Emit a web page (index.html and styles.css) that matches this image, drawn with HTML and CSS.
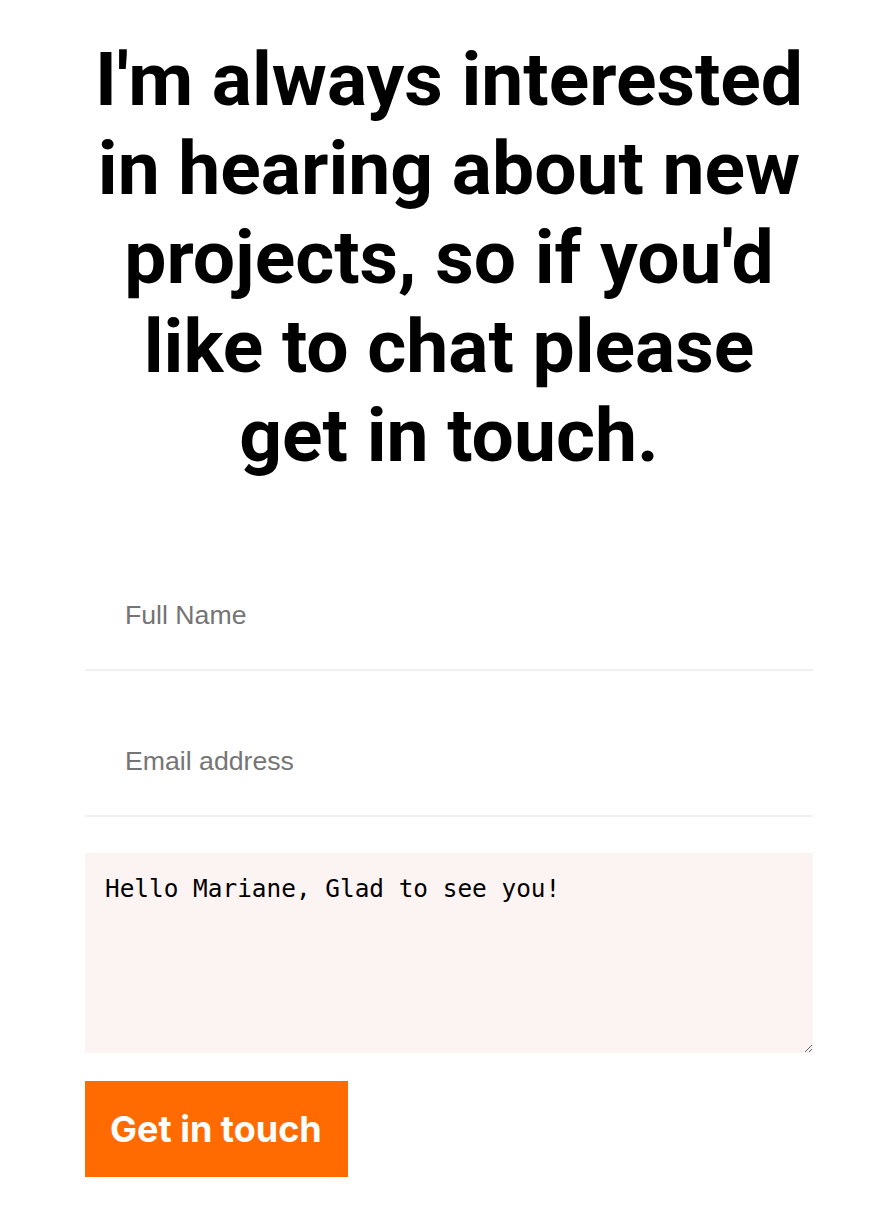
FILE: index.html
```html
<!DOCTYPE html>
<html lang="en">
<head>
<meta charset="utf-8">
<title>Contact</title>
<link rel="stylesheet" href="styles.css">
</head>
<body>
<main class="contact">
  <h1 class="contact-title">I'm always interested in hearing about new projects, so if you'd like to chat please get in touch.</h1>
  <form class="contact-form">
    <input class="field" type="text" placeholder="Full Name">
    <input class="field" type="email" placeholder="Email address">
    <textarea class="message">Hello Mariane, Glad to see you!</textarea>
    <button class="submit" type="button">Get in touch</button>
  </form>
</main>
</body>
</html>
```
FILE: styles.css
```css
html, body {
  margin: 0;
  padding: 0;
  background: #fff;
}

.contact {
  width: 728px;
  margin: 0 0 0 85px;
  padding-top: 35px;
}

.contact-title {
  margin: 0;
  font-family: Roboto, "Liberation Sans", sans-serif;
  font-weight: 700;
  font-size: 75px;
  line-height: 89px;
  text-align: center;
  color: #000;
}

.contact-form {
  display: flex;
  flex-direction: column;
  align-items: flex-start;
  margin-top: 81px;
}

.field {
  box-sizing: border-box;
  width: 100%;
  height: 110px;
  margin: 0 0 36px 0;
  padding: 0 40px;
  border: 0;
  border-bottom: 2px solid #f0f0f0;
  outline: none;
  font-family: "Liberation Sans", Arial, sans-serif;
  font-size: 26.67px;
  color: #222;
  background: #fff;
}

.field::placeholder {
  color: #757575;
}

.message {
  box-sizing: border-box;
  width: 100%;
  height: 200px;
  margin: 0;
  padding: 20px;
  border: 0;
  outline: none;
  background: #fcf3f3;
  font-family: "DejaVu Sans Mono", monospace;
  font-size: 24.4px;
  line-height: 31px;
  color: #000;
}

.submit {
  margin-top: 28px;
  height: 96px;
  padding: 0 26px 0 25px;
  border: 0;
  background: #ff6b00;
  color: #fff;
  font-family: Inter, Roboto, sans-serif;
  font-weight: 700;
  font-size: 36px;
  cursor: pointer;
}
```
